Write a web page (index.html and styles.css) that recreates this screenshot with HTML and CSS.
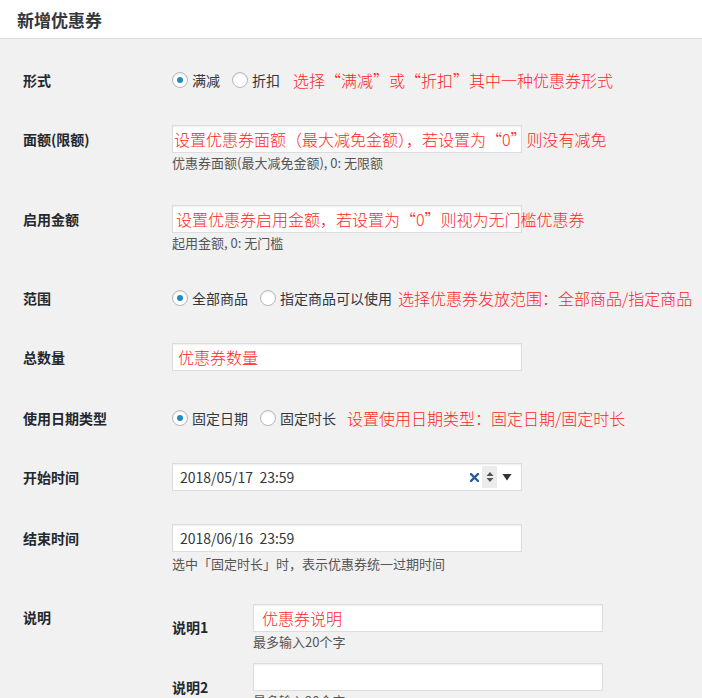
FILE: index.html
```html
<!DOCTYPE html>
<html lang="zh-CN">
<head>
<meta charset="utf-8">
<title>新增优惠券</title>
<link rel="stylesheet" href="styles.css">
</head>
<body>
<div class="header"><h1 class="title">新增优惠券</h1></div>
<div class="form">
  <div class="row r1">
    <div class="label lh20">形式</div>
    <div class="field">
      <div class="radios">
        <label class="radio"><span class="dot on"></span>满减</label>
        <label class="radio"><span class="dot"></span>折扣</label>
        <span class="note n1">选择“满减”或“折扣”其中一种优惠券形式</span>
      </div>
    </div>
  </div>

  <div class="row r2">
    <div class="label lh28">面额(限额)</div>
    <div class="field">
      <div class="input"><span class="note in-a">设置优惠券面额（最大减免金额），若设置为“0”则没有减免</span></div>
      <div class="desc">优惠券面额(最大减免金额), 0: 无限额</div>
    </div>
  </div>

  <div class="row r3">
    <div class="label lh28">启用金额</div>
    <div class="field">
      <div class="input"><span class="note in-b">设置优惠券启用金额，若设置为“0”则视为无门槛优惠券</span></div>
      <div class="desc">起用金额, 0: 无门槛</div>
    </div>
  </div>

  <div class="row r4">
    <div class="label lh20">范围</div>
    <div class="field">
      <div class="radios">
        <label class="radio"><span class="dot on"></span>全部商品</label>
        <label class="radio"><span class="dot"></span>指定商品可以使用</label>
        <span class="note n4">选择优惠券发放范围：全部商品/指定商品</span>
      </div>
    </div>
  </div>

  <div class="row r5">
    <div class="label lh28">总数量</div>
    <div class="field">
      <div class="input"><span class="note in-c">优惠券数量</span></div>
    </div>
  </div>

  <div class="row r6">
    <div class="label lh20">使用日期类型</div>
    <div class="field">
      <div class="radios">
        <label class="radio"><span class="dot on"></span>固定日期</label>
        <label class="radio"><span class="dot"></span>固定时长</label>
        <span class="note n6">设置使用日期类型：固定日期/固定时长</span>
      </div>
    </div>
  </div>

  <div class="row r7">
    <div class="label lh28">开始时间</div>
    <div class="field">
      <div class="input date">
        <span class="value">2018/05/17&nbsp; 23:59</span>
        <svg class="clear" width="9" height="9" viewBox="0 0 9 9"><path d="M1 1L8 8M8 1L1 8" stroke="#2b5c9b" stroke-width="2.4" stroke-linecap="square"/></svg>
        <span class="spin"><svg width="8" height="14" viewBox="0 0 8 14"><path d="M4 2L7.5 6H0.5Z M4 12L7.5 8H0.5Z" fill="#555"/></svg></span>
        <svg class="drop" width="10" height="8" viewBox="0 0 10 8"><path d="M0.5 1H9.5L5 7.5Z" fill="#333"/></svg>
      </div>
    </div>
  </div>

  <div class="row r8">
    <div class="label lh28">结束时间</div>
    <div class="field">
      <div class="input date"><span class="value">2018/06/16&nbsp; 23:59</span></div>
      <div class="desc d8">选中「固定时长」时，表示优惠券统一过期时间</div>
    </div>
  </div>

  <div class="row r9">
    <div class="label lh18 pt4">说明</div>
    <div class="field">
      <div class="sub">
        <div class="sublabel pt14">说明1</div>
        <div class="subfield">
          <div class="input"><span class="note in-d">优惠券说明</span></div>
          <div class="desc">最多输入20个字</div>
        </div>
      </div>
      <div class="sub s2">
        <div class="sublabel pt15">说明2</div>
        <div class="subfield">
          <div class="input"></div>
          <div class="desc">最多输入20个字</div>
        </div>
      </div>
    </div>
  </div>
</div>
</body>
</html>
```

FILE: styles.css
```css
* { box-sizing: border-box; }
html, body { margin: 0; padding: 0; }
body {
  background: #f1f1f1;
  font-family: "Open Sans", "Noto Sans CJK SC", sans-serif;
  color: #444;
  width: 702px;
  height: 698px;
  overflow: hidden;
}
.header {
  background: #fff;
  height: 39px;
  border-bottom: 1px solid #dedede;
}
.title {
  margin: 0;
  padding-left: 17px;
  font-size: 17px;
  line-height: 40px;
  font-weight: 700;
  color: #32373c;
  font-family: "Noto Sans CJK SC", sans-serif;
}
.form { padding-left: 23px; }
.row { display: flex; align-items: flex-start; }
.r1 { margin-top: 31px; }
.r2 { margin-top: 35px; }
.r3 { margin-top: 33px; }
.r4 { margin-top: 36px; }
.r5 { margin-top: 35px; }
.r6 { margin-top: 37px; }
.r7 { margin-top: 35px; }
.r8 { margin-top: 33px; }
.r9 { margin-top: 31px; }

.label {
  width: 149px;
  flex: none;
  font-size: 14px;
  font-weight: 700;
  color: #23282d;
  font-family: "Noto Sans CJK SC", sans-serif;
}
.lh20 { line-height: 20px; }
.lh28 { line-height: 28px; }
.lh18 { line-height: 18px; }
.pt4 { padding-top: 4px; }

.field { flex: none; }
.radios {
  display: flex;
  align-items: center;
  height: 20px;
  white-space: nowrap;
}
.radio {
  display: flex;
  align-items: center;
  font-size: 14px;
  line-height: 20px;
  color: #32373c;
  margin-right: 12px;
  font-family: "Noto Sans CJK SC", sans-serif;
}
.dot {
  width: 16px;
  height: 16px;
  border-radius: 50%;
  border: 1px solid #b4b9be;
  background: #fff;
  box-shadow: inset 0 1px 2px rgba(0,0,0,.1);
  margin-right: 4px;
  display: flex;
  align-items: center;
  justify-content: center;
}
.dot.on::before {
  content: "";
  width: 6px;
  height: 6px;
  border-radius: 50%;
  background: #1e8cbe;
}
.note {
  color: #ff1e1e;
  font-size: 16px;
  line-height: 22px;
  white-space: nowrap;
  font-family: "Noto Sans CJK SC", sans-serif;
  font-weight: 300;
}
.n1 { margin-left: 1px; }
.n4 { margin-left: -6px; }
.n6 { margin-left: -1px; }

.input {
  width: 350px;
  height: 28px;
  background: #fff;
  border: 1px solid #dddddd;
  box-shadow: inset 0 1px 2px rgba(0,0,0,.07);
  display: flex;
  align-items: center;
  overflow: visible;
}
.in-a { margin-left: 1px; }
.in-b { margin-left: 3px; }
.in-c { margin-left: 5px; }
.in-d { margin-left: 8px; }

.desc {
  margin-top: 1px;
  font-size: 13px;
  line-height: 18px;
  color: #555;
  white-space: nowrap;
  font-family: "Noto Sans CJK SC", sans-serif;
}
.d8 { margin-top: 3px; }
.date { padding: 0 9px 0 7px; }
.value {
  flex: 1;
  font-size: 14px;
  color: #32373c;
  font-family: "Noto Sans CJK SC", sans-serif;
  line-height: 26px;
}
.clear { margin-right: 3px; }
.spin {
  width: 15px;
  height: 22px;
  background: #ececec;
  display: flex;
  align-items: center;
  justify-content: center;
  margin-right: 5px;
}
.drop { display: block; }

.sub { display: flex; align-items: flex-start; }
.s2 { margin-top: 12px; }
.sublabel {
  width: 81px;
  flex: none;
  font-size: 14px;
  font-weight: 700;
  line-height: 18px;
  color: #23282d;
  font-family: "Noto Sans CJK SC", sans-serif;
}
.pt14 { padding-top: 14px; }
.pt15 { padding-top: 15px; }
.subfield { flex: none; }
```
